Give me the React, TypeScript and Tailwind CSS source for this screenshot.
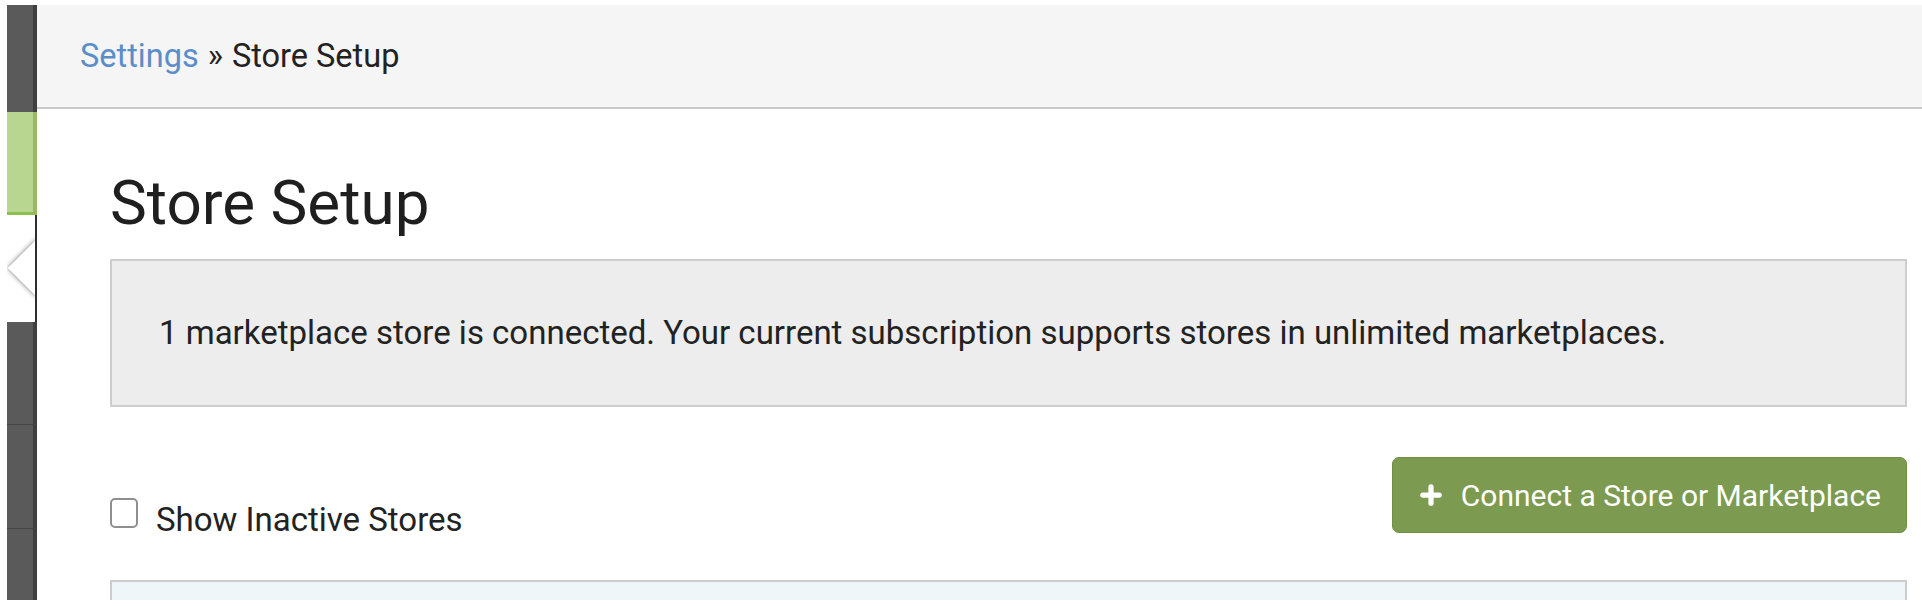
import { Plus } from "lucide-react";

function SideNav() {
  return (
    <div className="flex w-[30px] shrink-0 flex-col">
      <div className="h-[107px] border-r-[4px] border-[#3f3f3f] bg-[#5a5a5a]" />
      <div className="h-[103px] border-r-[4px] border-b-[3px] border-r-[#98b96a] border-b-[#8cbf52] bg-[#b8d690]" />
      <div className="h-[107px] border-r-2 border-[#2e2e2e] bg-white">
        <svg width="28" height="107" viewBox="0 0 28 107">
          <defs>
            <filter id="tri-shadow" x="-50%" y="-50%" width="200%" height="200%">
              <feDropShadow dx="0" dy="0" stdDeviation="2.4" floodColor="#000" floodOpacity="0.6" />
            </filter>
          </defs>
          <polygon points="1,53 30,24 30,82" fill="#fff" filter="url(#tri-shadow)" />
        </svg>
      </div>
      <div className="h-[103px] border-r-[4px] border-b border-[#3f3f3f] border-b-[#474747] bg-[#5a5a5a]" />
      <div className="h-[104px] border-r-[4px] border-b border-[#3f3f3f] border-b-[#474747] bg-[#5a5a5a]" />
      <div className="flex-1 border-r-[4px] border-[#3f3f3f] bg-[#5a5a5a]" />
    </div>
  );
}

export default function App() {
  return (
    <div className="flex h-[610px] w-[1922px] overflow-hidden bg-white pt-[5px] pb-[10px] pl-[7px] font-['Roboto',sans-serif] text-[#222]">
      <SideNav />

      <div className="flex min-w-0 flex-1 flex-col">
        {/* Breadcrumb */}
        <div className="flex h-[104px] shrink-0 items-center border-b-2 border-[#c9c9c9] bg-[#f5f5f5] pl-[43px] text-[32.5px]">
          <a className="text-[#5b8ec8]">Settings</a>
          <span className="ml-[9px]">»</span>
          <span className="ml-[9px]">Store Setup</span>
        </div>

        <div className="flex flex-1 flex-col pr-[15px] pl-[73px]">
          <h1 className="mt-[63px] text-[62px] leading-none font-normal text-[#1f1f1f]">Store Setup</h1>

          {/* Subscription notice */}
          <div className="mt-[25px] flex h-[148px] items-center border-2 border-[#cdcdcd] bg-[#ededed] pl-[47px] text-[33px]">
            1 marketplace store is connected. Your current subscription supports stores in unlimited marketplaces.
          </div>

          <div className="mt-[50px] flex items-start justify-between">
            <label className="mt-[43px] flex items-start gap-[18px] text-[33px] leading-[40px]">
              <span className="-mt-[2px] block h-[30px] w-[28px] rounded-[5px] border-2 border-[#8f8f8f] bg-white" />
              Show Inactive Stores
            </label>
            <button className="flex h-[76px] items-center gap-[16px] rounded-[7px] border border-[#6f8d45] bg-[#7d9a51] pr-[25px] pl-[24px] text-[30px] text-white">
              <Plus className="h-[28px] w-[28px]" strokeWidth={4.5} />
              Connect a Store or Marketplace
            </button>
          </div>

          {/* Store list (cut off) */}
          <div className="mt-[40px] flex-1 border-x-2 border-t-2 border-[#cccccc] bg-[#eef6fa]" />
        </div>
      </div>
    </div>
  );
}
